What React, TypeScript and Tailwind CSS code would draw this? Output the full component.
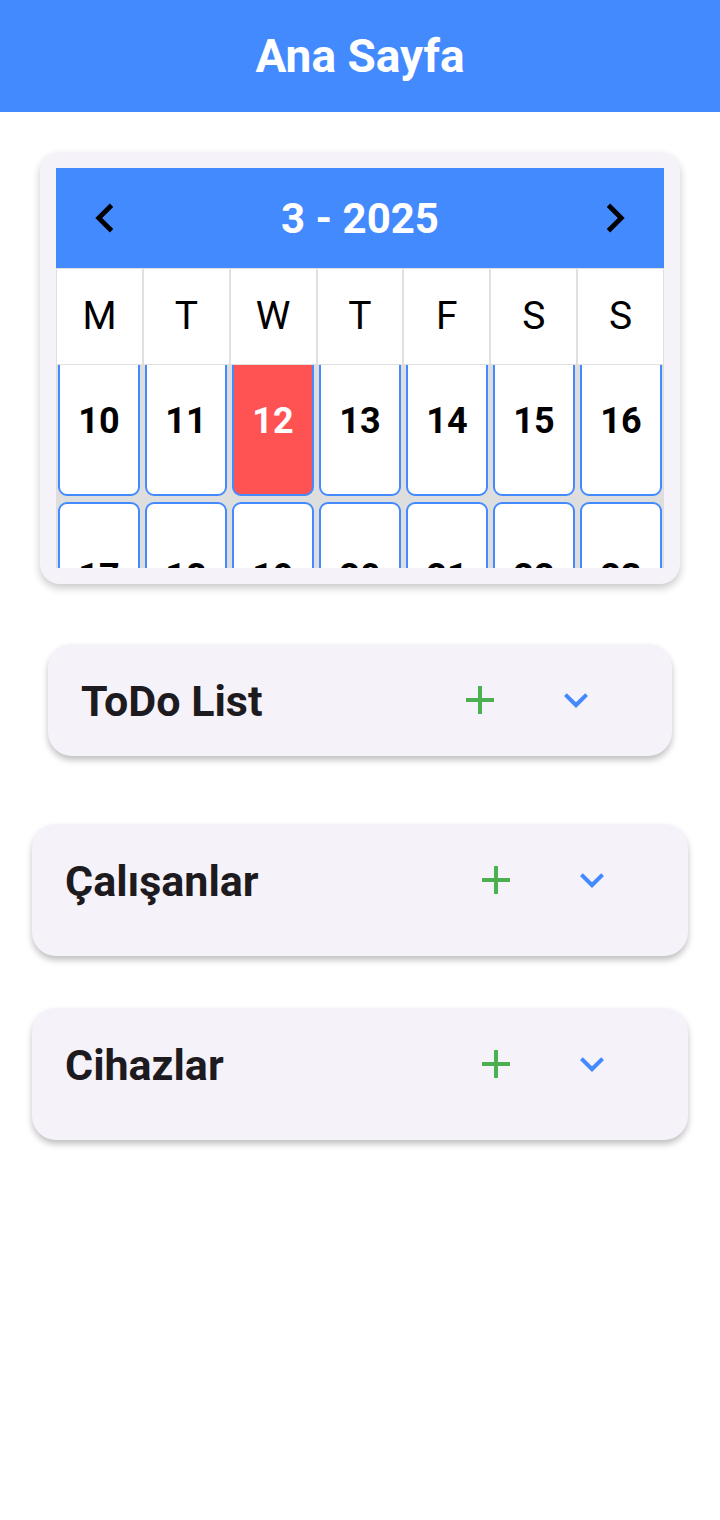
import type { JSX } from 'react';

const weekDays = ['M', 'T', 'W', 'T', 'F', 'S', 'S'];
const days = [10, 11, 12, 13, 14, 15, 16, 17, 18, 19, 20, 21, 22, 23];
const today = 12;

function ChevronLeft(): JSX.Element {
  return (
    <svg viewBox="0 0 24 24" className="h-[58px] w-[58px]" fill="#000">
      <path d="M15.41 7.41 14 6l-6 6 6 6 1.41-1.41L10.83 12z" />
    </svg>
  );
}

function ChevronRight(): JSX.Element {
  return (
    <svg viewBox="0 0 24 24" className="h-[58px] w-[58px]" fill="#000">
      <path d="M10 6 8.59 7.41 13.17 12l-4.58 4.59L10 18l6-6z" />
    </svg>
  );
}

function AddIcon(): JSX.Element {
  return (
    <svg viewBox="0 0 24 24" className="h-[48px] w-[48px]" fill="#4caf50">
      <path d="M19 13h-6v6h-2v-6H5v-2h6V5h2v6h6v2z" />
    </svg>
  );
}

function ExpandMore(): JSX.Element {
  return (
    <svg viewBox="0 0 24 24" className="h-[48px] w-[48px]" fill="#448aff">
      <path d="M16.59 8.59 12 13.17 7.41 8.59 6 10l6 6 6-6z" />
    </svg>
  );
}

function Calendar(): JSX.Element {
  return (
    <section className="rounded-[20px] bg-[#f6f2f9] p-4 shadow-[0_4px_8px_rgba(0,0,0,0.22)]">
      <div className="flex h-[100px] items-center justify-between bg-[#448aff] px-[20px]">
        <ChevronLeft />
        <span className="text-[42px] font-bold text-white">3 - 2025</span>
        <ChevronRight />
      </div>

      <div className="grid h-[97px] grid-cols-7 bg-white">
        {weekDays.map((d, i) => (
          <div
            key={i}
            className="flex items-center justify-center border border-[#e0e0e0] text-[39px] text-black"
          >
            {d}
          </div>
        ))}
      </div>

      <div className="h-[203px] overflow-hidden bg-[#dedede]">
        <div className="-mt-[19px] grid grid-cols-7 gap-x-[5px] gap-y-[6px] px-[2px]">
          {days.map((d) => (
            <div
              key={d}
              className={
                d === today
                  ? 'flex h-[150px] items-center justify-center rounded-[9px] border-2 border-[#448aff] bg-[#ff5252] text-[36px] font-bold text-white'
                  : 'flex h-[150px] items-center justify-center rounded-[9px] border-2 border-[#448aff] bg-white text-[36px] font-bold text-black'
              }
            >
              {d}
            </div>
          ))}
        </div>
      </div>
    </section>
  );
}

function Section({ title, tall }: { title: string; tall: boolean }): JSX.Element {
  return (
    <section
      className={
        tall
          ? 'h-[132px] rounded-[24px] bg-[#f6f2f9] shadow-[0_4px_6px_rgba(0,0,0,0.25)]'
          : 'h-[112px] rounded-[24px] bg-[#f6f2f9] shadow-[0_4px_6px_rgba(0,0,0,0.25)]'
      }
    >
      <div className="flex h-[112px] items-center pl-[33px] pr-[72px]">
        <h2 className="mt-[2px] flex-1 text-[43px] font-bold text-[#1d1b20]">{title}</h2>
        <AddIcon />
        <div className="ml-[48px]">
          <ExpandMore />
        </div>
      </div>
    </section>
  );
}

export default function App(): JSX.Element {
  return (
    <div className="min-h-[1520px] bg-white font-['Roboto',sans-serif]">
      <header className="flex h-[112px] items-center justify-center bg-[#448aff]">
        <h1 className="text-[46px] font-bold text-white">Ana Sayfa</h1>
      </header>

      <main className="flex flex-col px-[40px] pt-[40px]">
        <Calendar />
        <div className="mx-[8px] mt-[60px]">
          <Section title="ToDo List" tall={false} />
        </div>
        <div className="-mx-[8px] mt-[68px]">
          <Section title="Çalışanlar" tall />
        </div>
        <div className="-mx-[8px] mt-[52px]">
          <Section title="Cihazlar" tall />
        </div>
      </main>
    </div>
  );
}
